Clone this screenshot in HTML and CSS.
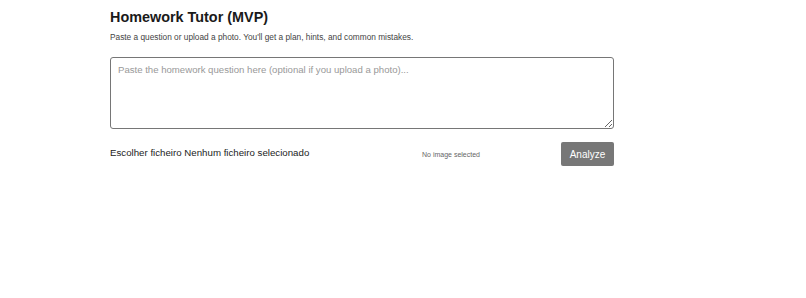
FILE: index.html
```html
<!DOCTYPE html>
<html lang="en">
<head>
  <meta charset="UTF-8">
  <meta name="viewport" content="width=device-width, initial-scale=1.0">
  <title>Homework Tutor (MVP)</title>
  <link rel="stylesheet" href="styles.css">
</head>
<body>

  <div class="app">
    <h1>Homework Tutor (MVP)</h1>
    <p class="lead">Paste a question or upload a photo. You'll get a plan, hints, and common mistakes.</p>

    <textarea class="question" placeholder="Paste the homework question here (optional if you upload a photo)..."></textarea>

    <div class="controls">
      <label class="file-pick">
        <span>Escolher ficheiro</span> <span>Nenhum ficheiro selecionado</span>
      </label>
      <span class="status">No image selected</span>
      <button class="analyze" disabled>Analyze</button>
    </div>
  </div>

</body>
</html>
```

FILE: styles.css
```css
body {
  margin: 0;
  background-color: #fff;
  color: #222;
  font-family: "Liberation Sans", Arial, sans-serif;
}
.app {
  width: 504px;
  margin-left: 110px;
  padding-top: 9px;
}
h1 {
  font-size: 14.4px;
  margin: 0 0 7px;
  color: #1a1a1a;
}
.lead {
  font-size: 8.3px;
  color: #444;
  margin: 0 0 15px;
}
.question {
  display: block;
  box-sizing: border-box;
  width: 504px;
  height: 72px;
  padding: 6px 7px;
  border: 1px solid #767676;
  border-radius: 3px;
  font-family: "Liberation Sans", Arial, sans-serif;
  font-size: 9.6px;
  resize: vertical;
}
.question::placeholder {
  color: #999;
}
.controls {
  display: flex;
  align-items: center;
  margin-top: 13px;
}
.file-pick {
  flex: 1;
  font-size: 9.7px;
  line-height: 1;
  padding-bottom: 3px;
  color: #222;
}
.status {
  font-size: 7px;
  color: #666;
  margin-right: 81px;
}
.analyze {
  width: 53px;
  height: 24px;
  border: none;
  border-radius: 2px;
  background-color: #777;
  color: #fff;
  font-family: "Liberation Sans", Arial, sans-serif;
  font-size: 10px;
}
```
